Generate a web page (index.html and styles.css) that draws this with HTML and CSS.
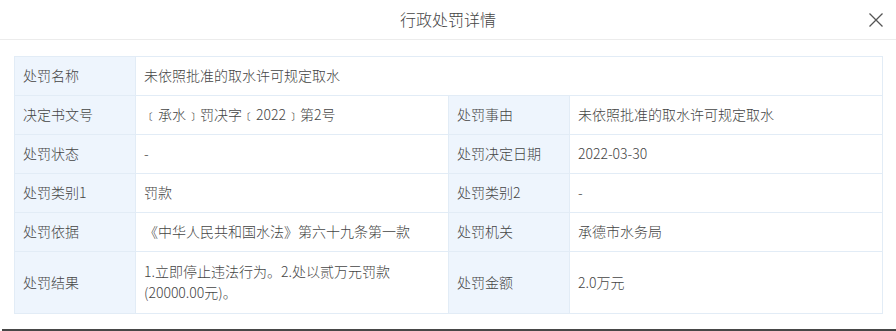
FILE: index.html
```html
<!DOCTYPE html>
<html lang="zh">
<head>
<meta charset="utf-8">
<title>行政处罚详情</title>
<link rel="stylesheet" href="styles.css">
</head>
<body>
<div class="modal">
  <div class="modal-header">
    <div class="modal-title">行政处罚详情</div>
    <button class="modal-close" aria-label="关闭">
      <svg width="16" height="16" viewBox="0 0 16 16"><path d="M1.5 1.5 L14.5 14.5 M14.5 1.5 L1.5 14.5" stroke="#555" stroke-width="1.3" fill="none"/></svg>
    </button>
  </div>
  <div class="modal-body">
    <table class="detail">
      <colgroup>
        <col class="c-label"><col class="c-value"><col class="c-label"><col class="c-value">
      </colgroup>
      <tr>
        <th>处罚名称</th>
        <td colspan="3">未依照批准的取水许可规定取水</td>
      </tr>
      <tr>
        <th>决定书文号</th>
        <td>﹝承水﹞罚决字﹝2022﹞第2号</td>
        <th>处罚事由</th>
        <td>未依照批准的取水许可规定取水</td>
      </tr>
      <tr>
        <th>处罚状态</th>
        <td>-</td>
        <th>处罚决定日期</th>
        <td>2022-03-30</td>
      </tr>
      <tr>
        <th>处罚类别1</th>
        <td>罚款</td>
        <th>处罚类别2</th>
        <td>-</td>
      </tr>
      <tr>
        <th>处罚依据</th>
        <td>《中华人民共和国水法》第六十九条第一款</td>
        <th>处罚机关</th>
        <td>承德市水务局</td>
      </tr>
      <tr class="tall">
        <th>处罚结果</th>
        <td>1.立即停止违法行为。2.处以贰万元罚款(20000.00元)。</td>
        <th>处罚金额</th>
        <td>2.0万元</td>
      </tr>
    </table>
  </div>
  <div class="modal-bottom"></div>
</div>
</body>
</html>
```

FILE: styles.css
```css
* { box-sizing: border-box; }
html, body {
  margin: 0;
  padding: 0;
  background: #fff;
}
body {
  width: 896px;
  height: 331px;
  overflow: hidden;
  font-family: "Noto Sans CJK SC", "Noto Sans", "Liberation Sans", sans-serif;
  color: #444;
}
.modal {
  display: flex;
  flex-direction: column;
  height: 331px;
}
.modal-header {
  position: relative;
  height: 40px;
  border-bottom: 1px solid #ececec;
  display: flex;
  align-items: center;
  justify-content: center;
}
.modal-title {
  font-size: 16px;
  line-height: 20px;
  color: #444;
  font-weight: 300;
  margin-top: -2px;
}
.modal-close {
  position: absolute;
  right: 11px;
  top: 11px;
  width: 18px;
  height: 18px;
  padding: 0;
  border: 0;
  background: none;
  display: flex;
  align-items: center;
  justify-content: center;
}
.modal-body {
  padding: 16px 14px 0 14px;
  flex: 1;
}
.detail {
  width: 868px;
  border-collapse: collapse;
  table-layout: fixed;
  font-size: 14px;
}
.c-label { width: 121px; }
.c-value { width: 313px; }
.detail th,
.detail td {
  border: 1px solid #e2ecf6;
  padding: 8px 8px 9px 8px;
  line-height: 21px;
  text-align: left;
  font-weight: 300;
  vertical-align: middle;
  color: #444;
}
.detail th {
  background: #eef5fd;
}
.detail tr.tall th,
.detail tr.tall td {
  padding-top: 9px;
  padding-bottom: 10px;
}
.modal-bottom {
  height: 2px;
  margin-left: 2px;
  background: #474747;
}
```
